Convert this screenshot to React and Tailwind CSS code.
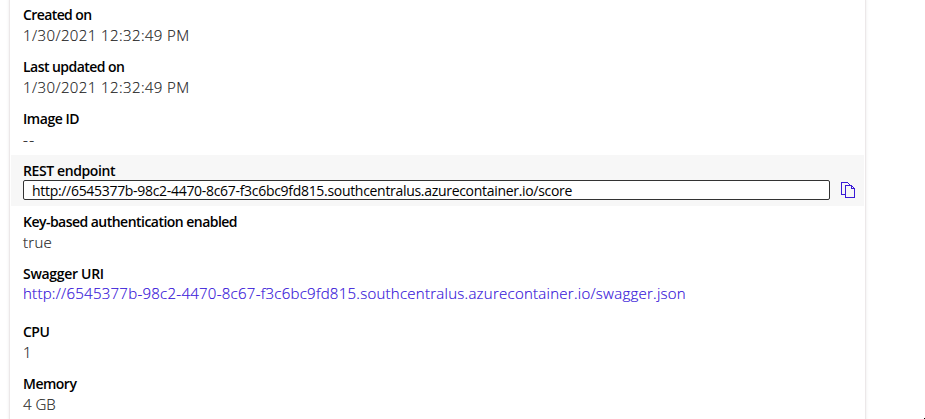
function Label({ children, className = "" }) {
  return (
    <dt className="h-5 text-[14px] leading-5 font-semibold text-black">
      <span className={className}>{children}</span>
    </dt>
  );
}

function Value({ children, className = "text-[#1c1c1c]" }) {
  return (
    <dd className="h-5 text-[15px] leading-5 font-light [-webkit-text-stroke:0.15px]">
      <span className={className}>{children}</span>
    </dd>
  );
}

function Row({ children, className = "h-[52px]" }) {
  return <div className={"shrink-0 pt-1.5 pl-3 whitespace-nowrap " + className}>{children}</div>;
}

function CopyIcon() {
  return (
    <svg width="16" height="18" viewBox="0 0 16 18" fill="none" stroke="#3a1bd6" shapeRendering="crispEdges">
      <path d="M5 13.5H1.5V1.5H8M8 2.5H9M9 3.5H10" />
      <path d="M5.5 4.5H11.5V7.5H14.5V16.5H5.5Z" />
      <path d="M12 5.5H13M13 6.5H14" />
    </svg>
  );
}

export default function App() {
  return (
    <div className="flex h-[419px] w-[925px] overflow-hidden bg-white pl-[9px] font-['Open_Sans','Noto_Sans',sans-serif]">
      <dl className="-mt-px flex h-[430px] w-[857px] shrink-0 flex-col border-x border-[#ece8e9] px-px shadow-[0_0_3px_rgba(0,0,0,0.09)]">
        <Row>
          <Label className="tracking-[-0.6px]">Created on</Label>
          <Value className="tracking-[0.4px] text-[#1c1c1c]">1/30/2021 12:32:49 PM</Value>
        </Row>
        <Row>
          <Label className="tracking-[-0.55px]">Last updated on</Label>
          <Value className="tracking-[0.4px] text-[#1c1c1c]">1/30/2021 12:32:49 PM</Value>
        </Row>
        <Row>
          <Label className="tracking-[-0.45px]">Image ID</Label>
          <Value className="tracking-[1.5px] text-[#1c1c1c]">--</Value>
        </Row>
        <Row className="h-[51px] bg-[#f7f7f7]">
          <Label className="tracking-[-0.4px]">REST endpoint</Label>
          <dd className="-mt-px flex h-5 items-center">
            <div className="h-5 w-[807px] rounded-[2px] border border-[#333] bg-white pl-2 text-[14px] leading-[20px] text-black">
              <span className="tracking-[-0.305px]">http://6545377b-98c2-4470-8c67-f3c6bc9fd815.southcentralus.azurecontainer.io/score</span>
            </div>
            <button className="ml-[10px]" aria-label="Copy">
              <CopyIcon />
            </button>
          </dd>
        </Row>
        <Row>
          <Label className="tracking-[-0.53px]">Key-based authentication enabled</Label>
          <Value className="tracking-[0.3px] text-[#1c1c1c]">true</Value>
        </Row>
        <Row className="h-[58px]">
          <Label className="tracking-[-0.3px]">Swagger URI</Label>
          <div className="-mt-px">
            <Value className="tracking-[0.26px] text-[#3210d8]">http://6545377b-98c2-4470-8c67-f3c6bc9fd815.southcentralus.azurecontainer.io/swagger.json</Value>
          </div>
        </Row>
        <Row>
          <Label className="tracking-[-0.5px]">CPU</Label>
          <Value>1</Value>
        </Row>
        <Row>
          <Label className="tracking-[-0.5px]">Memory</Label>
          <Value>4 GB</Value>
        </Row>
      </dl>
      <span className="mt-[418px] ml-auto size-px bg-black" />
    </div>
  );
}
